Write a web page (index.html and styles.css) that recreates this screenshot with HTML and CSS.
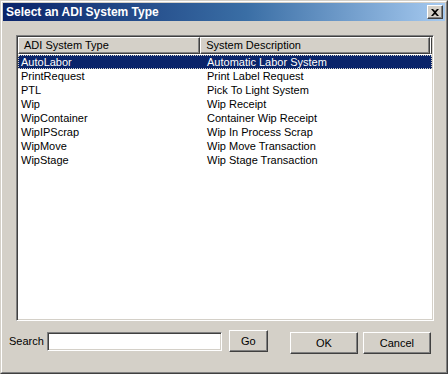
FILE: index.html
```html
<!DOCTYPE html>
<html>
<head>
<meta charset="utf-8">
<link rel="stylesheet" href="styles.css">
</head>
<body>
<div class="window">
  <div class="frame">
    <div class="titlebar">
      <span class="title">Select an ADI System Type</span>
      <span class="close">
        <svg width="8" height="7" viewBox="0 0 8 7"><path d="M0 0h2l2 2 2-2h2L5 3.5 8 7H6L4 5 2 7H0l3-3.5z" fill="#000"/></svg>
      </span>
    </div>
    <div class="content">
      <div class="listbox">
        <div class="header">
          <div class="hcell col1">ADI System Type</div>
          <div class="hcell col2">System Description</div>
          <div class="hcell rest"></div>
        </div>
        <div class="rows">
          <div class="row selected"><span class="c1">AutoLabor</span><span class="c2">Automatic Labor System</span></div>
          <div class="row"><span class="c1">PrintRequest</span><span class="c2">Print Label Request</span></div>
          <div class="row"><span class="c1">PTL</span><span class="c2">Pick To Light System</span></div>
          <div class="row"><span class="c1">Wip</span><span class="c2">Wip Receipt</span></div>
          <div class="row"><span class="c1">WipContainer</span><span class="c2">Container Wip Receipt</span></div>
          <div class="row"><span class="c1">WipIPScrap</span><span class="c2">Wip In Process Scrap</span></div>
          <div class="row"><span class="c1">WipMove</span><span class="c2">Wip Move Transaction</span></div>
          <div class="row"><span class="c1">WipStage</span><span class="c2">Wip Stage Transaction</span></div>
        </div>
      </div>
      <div class="bottom">
        <label class="search-label">Search</label>
        <div class="search-input"></div>
        <button class="btn go">Go</button>
        <button class="btn ok">OK</button>
        <button class="btn cancel">Cancel</button>
      </div>
    </div>
  </div>
</div>
</body>
</html>
```

FILE: styles.css
```css
html, body {
  margin: 0;
  padding: 0;
  background: #d4d0c8;
}
.window {
  width: 448px;
  height: 374px;
  box-sizing: border-box;
  border: 1px solid;
  border-color: #d4d0c8 #404040 #404040 #d4d0c8;
  font-family: "Liberation Sans", Arial, sans-serif;
  font-size: 11px;
  color: #000;
}
.frame {
  height: 100%;
  box-sizing: border-box;
  border: 1px solid;
  border-color: #ffffff #808080 #808080 #ffffff;
  padding: 1px;
  display: flex;
  flex-direction: column;
}
.titlebar {
  height: 18px;
  background: linear-gradient(to right, #0a246a 0%, #3a6ea5 55%, #a6caf0 100%);
  display: flex;
  align-items: center;
  justify-content: space-between;
  padding: 0 2px 0 3px;
}
.title {
  color: #fff;
  font-weight: bold;
  font-size: 12px;
}
.close {
  width: 16px;
  height: 14px;
  box-sizing: border-box;
  background: #d4d0c8;
  border: 1px solid;
  border-color: #fff #404040 #404040 #fff;
  box-shadow: inset -1px -1px #808080;
  display: flex;
  align-items: center;
  justify-content: center;
}
.content {
  flex: 1;
  display: flex;
  flex-direction: column;
  padding: 14px 11px 0 6px;
}
.listbox {
  margin-left: 7px;
  height: 286px;
  box-sizing: border-box;
  background: #fff;
  border: 1px solid;
  border-color: #808080 #ffffff #ffffff #808080;
  box-shadow: inset 1px 1px #404040, inset -1px -1px #d4d0c8;
  padding: 1px;
  display: flex;
  flex-direction: column;
}
.header {
  display: flex;
  height: 17px;
}
.hcell {
  box-sizing: border-box;
  background: #d4d0c8;
  border: 1px solid;
  border-color: #fff #404040 #404040 #fff;
  box-shadow: inset -1px -1px #808080;
  padding: 1px 0 0 5px;
  line-height: 13px;
  white-space: nowrap;
}
.col1 { width: 183px; }
.col2 { width: 231px; }
.rest { flex: 1; padding: 0; }
.rows {
  padding-top: 1px;
}
.row {
  display: flex;
  height: 14px;
  line-height: 14px;
  white-space: nowrap;
}
.row .c1 { width: 183px; padding-left: 3px; box-sizing: border-box; }
.row .c2 { padding-left: 6px; }
.row.selected {
  background: #0a246a;
  color: #fff;
  outline: 1px dotted #d4d0c8;
  outline-offset: -1px;
}
.bottom {
  display: flex;
  align-items: flex-start;
  margin-top: 9px;
}
.search-label {
  margin-top: 5px;
  margin-right: 3px;
  line-height: 13px;
}
.search-input {
  width: 175px;
  height: 19px;
  margin-top: 2px;
  box-sizing: border-box;
  background: #fff;
  border: 1px solid;
  border-color: #808080 #ffffff #ffffff #808080;
  box-shadow: inset 1px 1px #404040, inset -1px -1px #d4d0c8;
}
.btn {
  box-sizing: border-box;
  height: 22px;
  background: #d4d0c8;
  border: 1px solid;
  border-color: #fff #404040 #404040 #fff;
  box-shadow: inset -1px -1px #808080;
  font-family: "Liberation Sans", Arial, sans-serif;
  font-size: 11px;
  color: #000;
  padding: 0;
}
.go { width: 39px; margin-left: 7px; }
.ok { width: 68px; margin-left: 22px; margin-top: 2px; }
.cancel { width: 68px; margin-left: 5px; margin-top: 2px; }
```
